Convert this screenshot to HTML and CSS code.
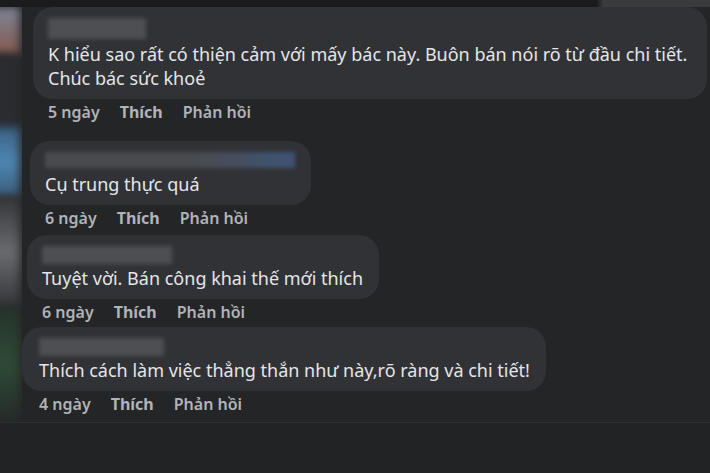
FILE: index.html
```html
<!DOCTYPE html>
<html lang="vi">
<head>
    <meta charset="UTF-8">
    <meta name="viewport" content="width=device-width, initial-scale=1.0">
    <title>Bình luận</title>
    <link rel="stylesheet" href="styles.css">
</head>
<body>
    <div class="top-strip"></div>

    <div class="page">
        <div class="avatars">
            <div class="blob blob-1"></div>
            <div class="blob blob-2"></div>
            <div class="blob blob-3"></div>
            <div class="blob blob-4"></div>
            <div class="blob blob-5"></div>
        </div>

        <div class="comments">
            <div class="comment c1">
                <div class="bubble">
                    <div class="name name-1"></div>
                    <p class="text">K hiểu sao rất có thiện cảm với mấy bác này. Buôn bán nói rõ từ đầu chi tiết.<br>Chúc bác sức khoẻ</p>
                </div>
                <div class="meta"><span>5 ngày</span><b>Thích</b><span>Phản hồi</span></div>
            </div>

            <div class="comment c2">
                <div class="bubble">
                    <div class="name name-2"></div>
                    <p class="text">Cụ trung thực quá</p>
                </div>
                <div class="meta"><span>6 ngày</span><b>Thích</b><span>Phản hồi</span></div>
            </div>

            <div class="comment c3">
                <div class="bubble">
                    <div class="name name-3"></div>
                    <p class="text">Tuyệt vời. Bán công khai thế mới thích</p>
                </div>
                <div class="meta"><span>6 ngày</span><b>Thích</b><span>Phản hồi</span></div>
            </div>

            <div class="comment c4">
                <div class="bubble">
                    <div class="name name-4"></div>
                    <p class="text">Thích cách làm việc thẳng thắn như này,rõ ràng và chi tiết!</p>
                </div>
                <div class="meta"><span>4 ngày</span><b>Thích</b><span>Phản hồi</span></div>
            </div>
        </div>
    </div>

    <div class="bottom"></div>
</body>
</html>
```

FILE: styles.css
```css
body {
    margin: 0;
    width: 710px;
    height: 473px;
    overflow: hidden;
    background-color: #242527;
    font-family: "Noto Sans", "Open Sans", sans-serif;
    color: #e4e6eb;
}

.top-strip {
    height: 7px;
    background: linear-gradient(to right, #1b1b1d 84%, #3a3b3d 85%);
}

.page {
    display: flex;
    height: 415px;
}

.avatars {
    width: 22px;
    flex-shrink: 0;
    overflow: hidden;
    display: flex;
    flex-direction: column;
}

.blob {
    width: 34px;
    margin-left: -14px;
    filter: blur(5px);
}

.blob-1 { height: 48px; background: linear-gradient(#7d8696, #85574f); }
.blob-2 { height: 72px; background: #2b2c2f; }
.blob-3 { height: 70px; background: linear-gradient(#3c5f80, #4d86b4, #3a5b78); }
.blob-4 { height: 110px; background: linear-gradient(#34363a, #6a6b6e, #343538); }
.blob-5 { height: 115px; background: linear-gradient(#26332b, #2e4a36, #262a29); }

.comments {
    display: flex;
    flex-direction: column;
    align-items: flex-start;
}

.comment {
    display: flex;
    flex-direction: column;
    align-items: flex-start;
}

.c1 { margin-left: 11px; }
.c2 { margin-left: 8px; margin-top: 16px; }
.c3 { margin-left: 5px; margin-top: 4px; }
.c4 { margin-left: 0; margin-top: 2px; }

.bubble {
    background-color: #313235;
    border-radius: 20px;
    padding: 11px 16px 9px 15px;
}

.c1 .bubble { padding-right: 20px; }
.c4 .bubble { padding-left: 17px; }
.c4 .meta { padding-left: 17px; }

.name {
    height: 18px;
    margin-bottom: 2px;
    background-color: #4e4f52;
    filter: blur(2px);
}

.name-1 { width: 98px; height: 21px; margin-bottom: 3px; }
.name-2 { width: 250px; height: 16px; margin-bottom: 4px; background: linear-gradient(to right, #4a4b4e 60%, #3d5478); }
.name-3 { width: 130px; }
.name-4 { width: 125px; }

.text {
    margin: 0;
    font-size: 18px;
    line-height: 24px;
}

.meta {
    display: flex;
    gap: 20px;
    padding-left: 15px;
    font-size: 16px;
    font-weight: 600;
    line-height: 26px;
    color: #b0b3b8;
}

.meta b {
    font-weight: bold;
}

.bottom {
    height: 51px;
    border-top: 1px solid #2f2f31;
    background-color: #222325;
}
```
